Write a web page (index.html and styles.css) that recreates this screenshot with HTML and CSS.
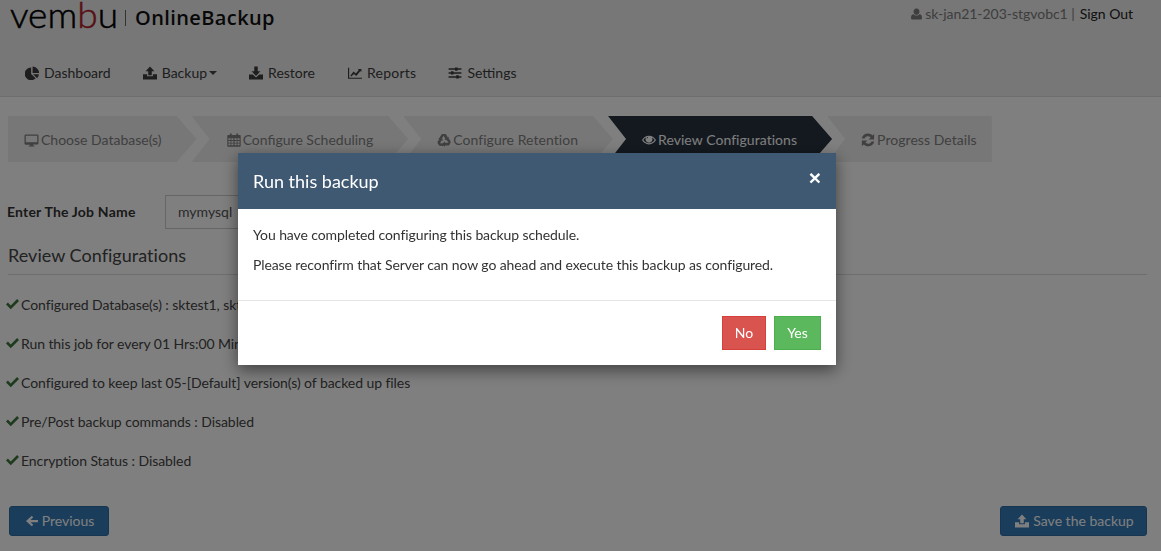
FILE: index.html
```html
<!DOCTYPE html>
<html lang="en">
<head>
<meta charset="utf-8">
<title>Vembu OnlineBackup</title>
<link rel="stylesheet" href="styles.css">
</head>
<body>
<svg class="defs" aria-hidden="true">
  <symbol id="i-pie" viewBox="0 0 24 24"><path d="M10.500 2.500v11l7.800 7.700A11 11 0 1 1 10.500 2.500zM13 1a11 11 0 0 1 11 11H13zM13.800 14.200h10a11 11 0 0 1-3 7z"/></symbol>
  <symbol id="i-upload" viewBox="0 0 24 24"><path d="M12 1l7.500 8H15v7H9V9H4.500zM0 14h7v3.500h10V14h7v9H0zM18 18.500h2.500v2H18z"/></symbol>
  <symbol id="i-download" viewBox="0 0 24 24"><path d="M9 1h6v8h4.500L12 17 4.500 9H9zM0 14.500h6.500l5.500 5 5.500-5H24V23H0z"/></symbol>
  <symbol id="i-chart" viewBox="0 0 24 24"><path d="M0 3h2v17h22v2H0zM4 16.500l5.500-7 4 3.500 5-6-1.800-1.800H23v5.200l-1.800-1.700-7 8.300-4-3.500L5.500 18z"/></symbol>
  <symbol id="i-sliders" viewBox="0 0 24 24"><path d="M1 4h11V2.500h4.500V4H23v2.500h-6.500V8H12V6.500H1zM1 10.700h4V9.200h4.500v1.500H23v2.500H9.500v1.500H5v-1.500H1zM1 17.500h13V16h4.500v1.500H23V20h-4.500v1.500H14V20H1z"/></symbol>
  <symbol id="i-desktop" viewBox="0 0 24 24"><path fill-rule="evenodd" d="M2 2.500h20a2 2 0 0 1 2 2v13a2 2 0 0 1-2 2h-7.500l.5 2h2v1.500H7V22h2l.5-2H2a2 2 0 0 1-2-2v-13.500a2 2 0 0 1 2-2zM2.200 4.700v11h19.600v-11z"/></symbol>
  <symbol id="i-cal" viewBox="0 0 24 24"><path fill-rule="evenodd" d="M2 3.500h3V1h3v2.500h8V1h3v2.500h3a1.500 1.500 0 0 1 1.500 1.500v17a1.500 1.500 0 0 1-1.500 1.500H2A1.500 1.500 0 0 1 .5 22V5A1.500 1.500 0 0 1 2 3.500zM2.500 9v3h3.500V9zM7.500 9v3H11V9zM13 9v3h3.500V9zM18 9v3h3.500V9zM2.500 13.500v3h3.500v-3zM7.500 13.500v3H11v-3zM13 13.500v3h3.500v-3zM18 13.500v3h3.500v-3zM2.500 18v3h3.500v-3zM7.500 18v3H11v-3zM13 18v3h3.500v-3zM18 18v3h3.500v-3z"/></symbol>
  <symbol id="i-recycle" viewBox="0 0 24 24">
    <path id="r-arm" d="M9.500 1.500h4.500a2 2 0 0 1 1.700 1l2.800 5 2.100-1.200-1.900 6.400-6.400-1.600 2.100-1.200-3-5.300-3.300 5.400-3.700-2.200 3.400-5.300A2 2 0 0 1 9.500 1.500z"/>
    <use href="#r-arm" transform="rotate(120 12 13)"/>
    <use href="#r-arm" transform="rotate(240 12 13)"/>
  </symbol>
  <symbol id="i-eye" viewBox="0 0 24 24"><path fill-rule="evenodd" d="M12 4.500c5.500 0 9.800 3.500 12 7.500-2.200 4-6.500 7.500-12 7.500S2.200 16 0 12c2.200-4 6.500-7.500 12-7.500zM2.300 12c2 3.200 5.500 5.700 9.700 5.700s7.700-2.500 9.700-5.700c-1.100-1.800-2.700-3.300-4.500-4.300a6 6 0 1 1-10.400 0C4.900 8.700 3.400 10.200 2.300 12zM10 7a2 2 0 0 0-2 2h1.500a1 1 0 0 1 .5-.7z"/></symbol>
  <symbol id="i-refresh" viewBox="0 0 24 24"><path d="M12 1c3 0 5.700 1.200 7.600 3.100L22.500 1.500V11H13l3.400-3.400A6.300 6.300 0 0 0 6 9.500H1.300A11 11 0 0 1 12 1zM1.500 13H11l-3.400 3.400a6.300 6.300 0 0 0 10.400-1.900h4.700A11 11 0 0 1 4.400 19.900L1.500 22.500z"/></symbol>
  <symbol id="i-check" viewBox="0 0 24 24"><path d="M3.500 8.500L0 12l8.800 8.800L24 5.500 20.500 2 8.800 13.800z"/></symbol>
  <symbol id="i-left" viewBox="0 0 24 24"><path d="M11.500 1.500l3 3-5.300 5.300H24v4.500H9.200l5.300 5.300-3 3L0 12z"/></symbol>
  <symbol id="i-user" viewBox="0 0 24 24"><path d="M12 0a6.500 6.500 0 0 1 6.200 8.500C17.300 11.500 15 13.500 12 13.500S6.700 11.500 5.800 8.500A6.500 6.500 0 0 1 12 0zM5.500 12.500C7 14.200 9.300 15.300 12 15.300s5-1.100 6.500-2.800c3.800.3 5.500 3.500 5.500 8 0 2.200-1.400 3.500-3.400 3.500H3.400C1.400 24 0 22.700 0 20.500c0-4.500 1.700-7.700 5.500-8z"/></symbol>
</svg>

<header class="site-header">
  <div class="brand-row">
    <div class="brand">
      <svg class="logo" viewBox="0 0 110 32" role="img" aria-label="vembu">
        <text class="logo-word" x="0" y="28" textLength="108" lengthAdjust="spacingAndGlyphs">vem<tspan class="logo-b">b</tspan>u</text>
      </svg>
      <span class="logo-sep"></span>
      <span class="logo-product">OnlineBackup</span>
    </div>
    <div class="account">
      <svg class="icon user-icon"><use href="#i-user"/></svg>
      <span>sk-jan21-203-stgvobc1 |</span>
      <a class="signout">Sign Out</a>
    </div>
  </div>
  <nav class="main-nav">
    <a class="nav-item"><svg class="icon"><use href="#i-pie"/></svg>Dashboard</a>
    <a class="nav-item"><svg class="icon"><use href="#i-upload"/></svg>Backup<span class="caret"></span></a>
    <a class="nav-item"><svg class="icon"><use href="#i-download"/></svg>Restore</a>
    <a class="nav-item nav-reports"><svg class="icon"><use href="#i-chart"/></svg>Reports</a>
    <a class="nav-item"><svg class="icon"><use href="#i-sliders"/></svg>Settings</a>
  </nav>
</header>

<main class="content">
  <ol class="wizard">
    <li class="step step-first"><svg class="icon wide"><use href="#i-desktop"/></svg>Choose Database(s)</li>
    <li class="step step-second"><svg class="icon"><use href="#i-cal"/></svg>Configure Scheduling</li>
    <li class="step"><svg class="icon"><use href="#i-recycle"/></svg>Configure Retention</li>
    <li class="step step-active"><svg class="icon"><use href="#i-eye"/></svg>Review Configurations</li>
    <li class="step step-last"><svg class="icon"><use href="#i-refresh"/></svg>Progress Details</li>
  </ol>

  <div class="job-row">
    <label class="job-label">Enter The Job Name</label>
    <div class="job-input">mymysql</div>
  </div>

  <h2 class="section-title">Review Configurations</h2>

  <ul class="review-list">
    <li><svg class="icon check"><use href="#i-check"/></svg>Configured Database(s) : sktest1, sktest2</li>
    <li><svg class="icon check"><use href="#i-check"/></svg>Run this job for every 01 Hrs:00 Mins</li>
    <li><svg class="icon check"><use href="#i-check"/></svg>Configured to keep last 05-[Default] version(s) of backed up files</li>
    <li><svg class="icon check"><use href="#i-check"/></svg>Pre/Post backup commands : Disabled</li>
    <li><svg class="icon check"><use href="#i-check"/></svg>Encryption Status : Disabled</li>
  </ul>

  <div class="page-actions">
    <button class="btn btn-primary prev"><svg class="icon"><use href="#i-left"/></svg>Previous</button>
    <button class="btn btn-primary save"><svg class="icon"><use href="#i-upload"/></svg>Save the backup</button>
  </div>
</main>

<div class="backdrop"></div>

<section class="modal">
  <div class="modal-head">
    <h3 class="modal-title">Run this backup</h3>
    <span class="modal-close">×</span>
  </div>
  <div class="modal-body">
    <p>You have completed configuring this backup schedule.</p>
    <p>Please reconfirm that Server can now go ahead and execute this backup as configured.</p>
  </div>
  <div class="modal-foot">
    <button class="btn btn-no">No</button>
    <button class="btn btn-yes">Yes</button>
  </div>
</section>
</body>
</html>
```

FILE: styles.css
```css
* { box-sizing: border-box; }

html, body {
  margin: 0;
  height: 100%;
  overflow: hidden;
}

body {
  background: #fff;
  color: #444;
  font-family: Lato, "Liberation Sans", sans-serif;
  font-size: 14px;
  line-height: 20px;
}

.defs { display: none; }

.icon {
  width: 14px;
  height: 14px;
  fill: currentColor;
  flex: none;
}

/* header */
.site-header {
  height: 97px;
  background: #eee;
  border-bottom: 1px solid #ddd;
}

.brand-row {
  display: flex;
  justify-content: space-between;
  height: 47px;
  padding: 0 28px 0 10px;
}

.brand {
  display: flex;
  align-items: flex-start;
  height: 32px;
}

.logo {
  width: 110px;
  height: 32px;
  flex: none;
}

.logo-word {
  font-family: Lato, sans-serif;
  font-weight: 300;
  font-size: 36px;
  fill: #000;
  stroke: #000;
  stroke-width: .5px;
}

.logo-b { fill: #b0202a; stroke: #b0202a; }

.logo-sep {
  width: 1px;
  height: 16px;
  margin: 10px 9px 0 5px;
  background: #666;
}

.logo-product {
  font-family: "Open Sans", sans-serif;
  font-weight: 600;
  font-size: 20px;
  line-height: 36px;
  color: #111;
  letter-spacing: 0.4px;
}

.account {
  display: flex;
  align-items: center;
  height: 28px;
  color: #7c7c7c;
  letter-spacing: -.03px;
}

.user-icon { width: 11px; height: 12px; margin-right: 3px; }

.signout { color: #222; margin-left: 5px; }

.main-nav {
  display: flex;
  height: 50px;
  padding: 16px 0 0 25px;
  gap: 32px;
}

.nav-item {
  display: flex;
  align-items: center;
  height: 20px;
  color: #3c3c3c;
}

.nav-reports {
  margin-left: 1px;
  letter-spacing: .25px;
}

.nav-item .icon { margin-right: 5px; }

.caret {
  width: 0;
  height: 0;
  margin-left: 2px;
  border-left: 4px solid transparent;
  border-right: 4px solid transparent;
  border-top: 4px solid #444;
}

/* content */
.content {
  padding: 19px 14px 0 8px;
}

.wizard {
  display: flex;
  margin: 0;
  padding: 0;
  list-style: none;
}

.step {
  display: flex;
  align-items: center;
  height: 46px;
  padding: 2px 35px 0 34px;
  margin-left: -5px;
  background: #eee;
  color: #808080;
  letter-spacing: .05px;
  clip-path: polygon(0 0, calc(100% - 20px) 0, 100% 50%, calc(100% - 20px) 100%, 0 100%, 18px 50%);
}

.step .icon { margin-right: 2px; }

.step .wide { width: 15px; }

.step-first {
  margin-left: 0;
  padding-left: 16px;
  letter-spacing: 0;
  clip-path: polygon(0 0, calc(100% - 20px) 0, 100% 50%, calc(100% - 20px) 100%, 0 100%);
}

.step-second {
  padding-left: 35px;
  letter-spacing: 0;
}

.step-active {
  background: #28333f;
  color: #fff;
}

.step-last {
  padding-right: 15px;
  clip-path: polygon(0 0, 100% 0, 100% 100%, 0 100%, 18px 50%);
}

.job-row {
  display: flex;
  align-items: center;
  margin-top: 33px;
}

.job-label {
  width: 157px;
  margin-left: -1px;
  margin-right: 1px;
  font-weight: 700;
  color: #333;
  letter-spacing: .2px;
}

.job-input {
  width: 340px;
  height: 34px;
  padding: 6px 12px;
  border: 1px solid #ccc;
  color: #555;
}

.section-title {
  margin: 14px 0 0;
  padding-bottom: 8px;
  height: 32px;
  font-size: 18px;
  font-weight: 400;
  line-height: 24px;
  color: #444;
  letter-spacing: .03px;
  border-bottom: 1px solid #ddd;
}

.review-list {
  margin: 10px 0 0 -2px;
  padding: 0;
  list-style: none;
  letter-spacing: -.07px;
}

.review-list li {
  display: flex;
  align-items: center;
  height: 39px;
  color: #444;
}

.check {
  width: 13px;
  height: 13px;
  margin-right: 2px;
  color: #3c763d;
}

.page-actions {
  display: flex;
  justify-content: space-between;
  margin-top: 26px;
  padding-left: 1px;
}

.btn {
  font: inherit;
  height: 30px;
  border-radius: 3px;
  display: inline-flex;
  align-items: center;
  justify-content: center;
  color: #fff;
  border: 1px solid transparent;
}

.btn-primary {
  background: #337ab7;
  border-color: #2e6da4;
}

.btn-primary .icon { margin-right: 4px; }

.prev { width: 100px; padding-left: 8px; }

.prev .icon { width: 12px; height: 12px; }

.save { width: 147px; padding-left: 8px; }

/* overlay */
.backdrop {
  position: fixed;
  inset: 0;
  background: rgba(0, 0, 0, .5);
}

.modal {
  position: fixed;
  left: 238px;
  top: 153px;
  width: 598px;
  background: #fff;
  box-shadow: 0 5px 15px rgba(0, 0, 0, .5);
  color: #333;
}

.modal-head {
  display: flex;
  justify-content: space-between;
  align-items: center;
  height: 56px;
  padding: 0 15px;
  background: #3f5973;
  color: #fff;
}

.modal-title {
  margin: 0;
  font-size: 18px;
  font-weight: 400;
}

.modal-close {
  font-family: "Liberation Sans", sans-serif;
  font-size: 21px;
  font-weight: 700;
  line-height: 1;
  margin-top: -8px;
}

.modal-body {
  height: 92px;
  padding: 16px 15px 0;
  border-bottom: 1px solid #e5e5e5;
  letter-spacing: -.1px;
}

.modal-body p { margin: 0 0 10px; }

.modal-foot {
  display: flex;
  justify-content: flex-end;
  gap: 8px;
  height: 64px;
  padding: 15px;
}

.modal-foot .btn {
  height: 34px;
  border-radius: 0;
}

.btn-no {
  width: 44px;
  background: #d9534f;
  border-color: #d43f3a;
}

.btn-yes {
  width: 47px;
  background: #5cb85c;
  border-color: #4cae4c;
}
```
